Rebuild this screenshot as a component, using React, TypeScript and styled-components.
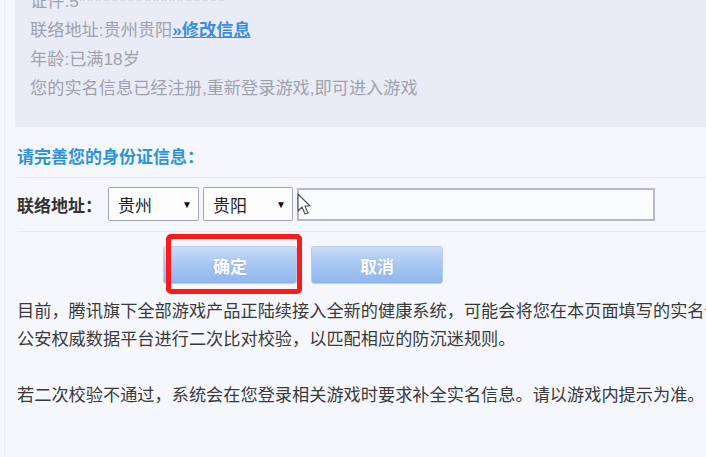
import React from "react";
import styled, { createGlobalStyle } from "styled-components";

const Global = createGlobalStyle`
  html, body { margin: 0; padding: 0; background: #f5f7fc; overflow: hidden; }
  body { font-family: "Liberation Sans", "Noto Sans CJK SC", sans-serif; }
`;

const Page = styled.div`
  width: 706px;
  height: 457px;
  overflow: hidden;
  background: #f5f7fc;
  box-sizing: border-box;
  padding-left: 4px;
`;

const Frame = styled.div`
  display: flow-root;
  border-left: 1px solid #eaedf4;
  height: 100%;
  padding-left: 10px;
  box-sizing: border-box;
`;

const InfoPanel = styled.div`
  margin-top: -20px;
  margin-right: -20px;
  padding: 7px 15px 24px 15px;
  background: #e9ecf7;
  color: #9fa2ab;
  font-size: 17.2px;
  line-height: 29px;
`;

const InfoLine = styled.div`
  white-space: nowrap;
`;

const Masked = styled.span`
  letter-spacing: 1.5px;
`;

const EditLink = styled.a`
  color: #3b8fd9;
  font-weight: bold;
  text-decoration: underline;
`;

const Body = styled.div`
  padding: 20px 0 0 2px;
`;

const Heading = styled.div`
  color: #2d93d6;
  font-weight: bold;
  font-size: 17px;
  line-height: 22px;
`;

const Divider = styled.div<{ $top: number }>`
  height: 1px;
  background: #e3e7f1;
  margin-top: ${(p) => p.$top}px;
  margin-right: -20px;
`;

const FormRow = styled.div`
  display: flex;
  align-items: center;
  margin-top: 9px;
  height: 34px;
`;

const FieldLabel = styled.div`
  font-weight: bold;
  font-size: 17px;
  color: #333;
  width: 91px;
  white-space: nowrap;
`;

const Select = styled.div<{ $w: number }>`
  position: relative;
  box-sizing: border-box;
  width: ${(p) => p.$w}px;
  height: 34px;
  border: 1px solid #a3a6ad;
  border-radius: 2px;
  background: #fdfdfe;
  display: flex;
  align-items: center;
  padding-left: 9px;
  margin-right: 4px;
  font-size: 17px;
  color: #222;
`;

const Arrow = styled.span`
  position: absolute;
  right: 6px;
  top: 50%;
  transform: translateY(-50%);
  font-size: 10px;
  color: #111;
`;

const TextInput = styled.div`
  position: relative;
  box-sizing: border-box;
  width: 358px;
  height: 33px;
  border: 2px solid #b4b8c8;
  background: #fbfcfe;
  margin-top: 1px;
`;

const Cursor = styled.svg`
  position: absolute;
  left: -2px;
  top: 3px;
`;

const ButtonRow = styled.div`
  display: flex;
  gap: 14px;
  margin-top: 14px;
  padding-left: 146px;
`;

const ButtonWrap = styled.div`
  position: relative;
`;

const Button = styled.div<{ $w: number }>`
  width: ${(p) => p.$w}px;
  height: 38px;
  box-sizing: border-box;
  border: 1px solid #b9cde9;
  border-radius: 3px;
  background: linear-gradient(#c9ddf8 0%, #a9c8f3 45%, #8fb5ee 100%);
  color: #fff;
  font-weight: bold;
  font-size: 17px;
  display: flex;
  align-items: center;
  justify-content: center;
  text-shadow: 0 0 2px rgba(120, 150, 200, 0.6);
`;

const Highlight = styled.div`
  position: absolute;
  left: 3px;
  right: -5px;
  top: -12px;
  bottom: -10px;
  border: 5px solid #fb1b1b;
  border-radius: 5px;
  pointer-events: none;
`;

const Notes = styled.div`
  margin-top: 13px;
  font-size: 17.2px;
  line-height: 28px;
  color: #3a3a3a;
  white-space: nowrap;
`;

const Note = styled.p`
  margin: 0;
  min-height: 28px;
`;

export default function App() {
  return (
    <>
      <Global />
      <Page>
        <Frame>
          <InfoPanel>
            <InfoLine>
              证件:5<Masked>******************</Masked>
            </InfoLine>
            <InfoLine>
              联络地址:贵州贵阳<EditLink>»修改信息</EditLink>
            </InfoLine>
            <InfoLine>年龄:已满18岁</InfoLine>
            <InfoLine>您的实名信息已经注册,重新登录游戏,即可进入游戏</InfoLine>
          </InfoPanel>
          <Body>
            <Heading>请完善您的身份证信息：</Heading>
            <Divider $top={8} />
            <FormRow>
              <FieldLabel>联络地址：</FieldLabel>
              <Select $w={91}>
                贵州<Arrow>▼</Arrow>
              </Select>
              <Select $w={90}>
                贵阳<Arrow>▼</Arrow>
              </Select>
              <TextInput>
                <Cursor width="16" height="24" viewBox="0 0 16 24">
                  <path
                    d="M1 1 L1 18 L5 14 L8 21 L11 20 L8 13 L13 13 Z"
                    fill="#fff"
                    stroke="#555"
                    strokeWidth="1.2"
                    strokeLinejoin="round"
                  />
                </Cursor>
              </TextInput>
            </FormRow>
            <Divider $top={10} />
            <ButtonRow>
              <ButtonWrap>
                <Button $w={134}>确定</Button>
                <Highlight />
              </ButtonWrap>
              <Button $w={132}>取消</Button>
            </ButtonRow>
            <Notes>
              <Note>目前，腾讯旗下全部游戏产品正陆续接入全新的健康系统，可能会将您在本页面填写的实名信息提交至</Note>
              <Note>公安权威数据平台进行二次比对校验，以匹配相应的防沉迷规则。</Note>
              <Note></Note>
              <Note>若二次校验不通过，系统会在您登录相关游戏时要求补全实名信息。请以游戏内提示为准。</Note>
            </Notes>
          </Body>
        </Frame>
      </Page>
    </>
  );
}
